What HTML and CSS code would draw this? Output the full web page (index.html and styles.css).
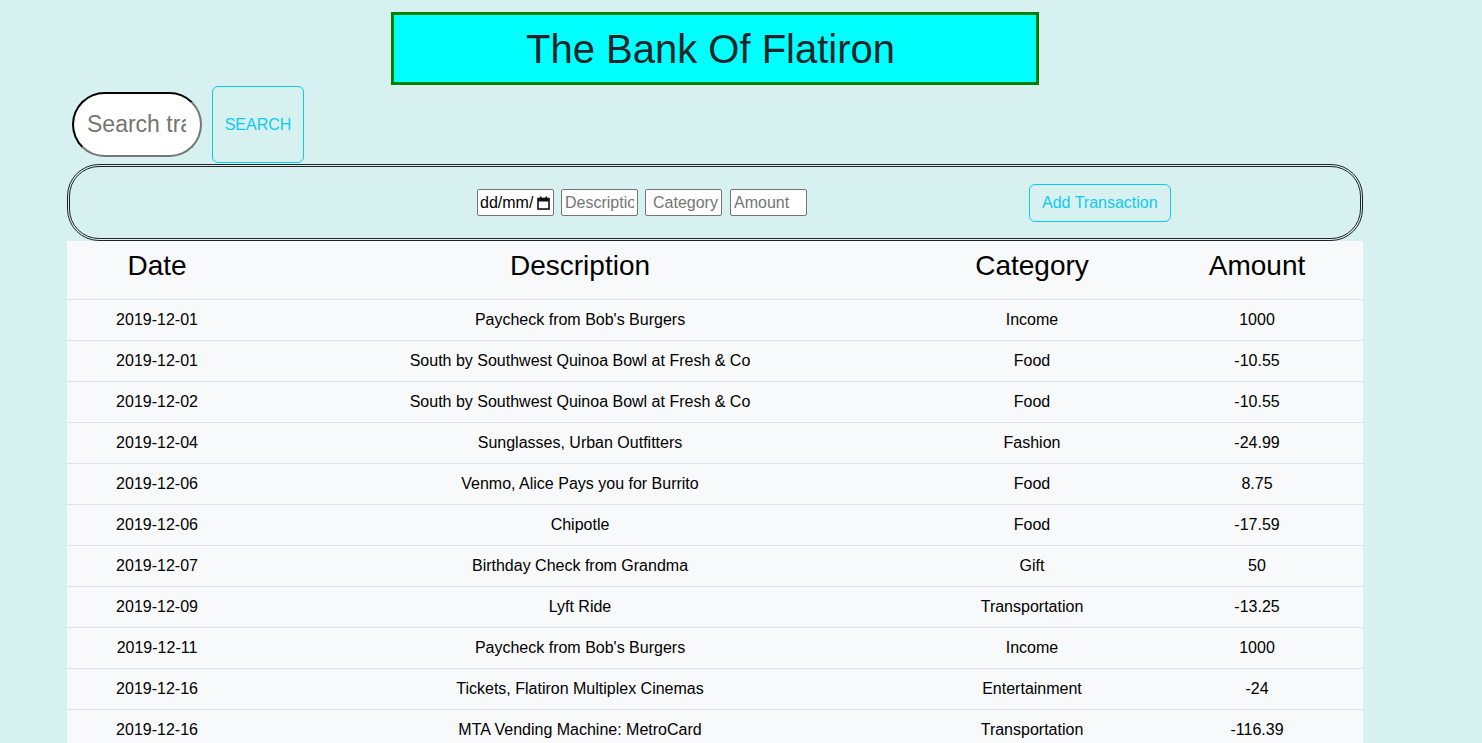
FILE: index.html
```html
<!DOCTYPE html>
<html lang="en">
<head>
<meta charset="utf-8">
<title>The Bank Of Flatiron</title>
<link rel="stylesheet" href="styles.css">
</head>
<body>
<div class="container">
  <div class="banner">
    <h1 class="banner-title">The Bank Of Flatiron</h1>
  </div>
  <div class="search-row">
    <input class="search-input" type="text" placeholder="Search transactions">
    <button class="btn-outline search-btn" type="button">SEARCH</button>
  </div>
  <form class="add-form">
    <div class="fields">
      <div class="date-input">
        <span class="date-text">dd/mm/</span>
        <svg class="cal-icon" width="13" height="14" viewBox="0 0 13 14" aria-hidden="true">
          <rect x="1" y="2.5" width="11" height="10.5" fill="none" stroke="#111" stroke-width="1.6"/>
          <rect x="1" y="2.5" width="11" height="3" fill="#111"/>
          <rect x="3" y="0.5" width="1.6" height="3" fill="#111"/>
          <rect x="8.4" y="0.5" width="1.6" height="3" fill="#111"/>
        </svg>
      </div>
      <input class="field" type="text" placeholder="Description">
      <input class="field field-cat" type="text" placeholder="Category">
      <input class="field" type="number" placeholder="Amount">
    </div>
    <button class="btn-outline add-btn" type="button">Add Transaction</button>
  </form>
  <table class="tx-table">
    <colgroup>
      <col class="c-date"><col class="c-desc"><col class="c-cat"><col class="c-amt">
    </colgroup>
    <thead>
      <tr>
        <th><h3 class="th-title">Date</h3></th>
        <th><h3 class="th-title">Description</h3></th>
        <th><h3 class="th-title">Category</h3></th>
        <th><h3 class="th-title">Amount</h3></th>
      </tr>
    </thead>
    <tbody>
      <tr><td>2019-12-01</td><td>Paycheck from Bob's Burgers</td><td>Income</td><td>1000</td></tr>
      <tr><td>2019-12-01</td><td>South by Southwest Quinoa Bowl at Fresh &amp; Co</td><td>Food</td><td>-10.55</td></tr>
      <tr><td>2019-12-02</td><td>South by Southwest Quinoa Bowl at Fresh &amp; Co</td><td>Food</td><td>-10.55</td></tr>
      <tr><td>2019-12-04</td><td>Sunglasses, Urban Outfitters</td><td>Fashion</td><td>-24.99</td></tr>
      <tr><td>2019-12-06</td><td>Venmo, Alice Pays you for Burrito</td><td>Food</td><td>8.75</td></tr>
      <tr><td>2019-12-06</td><td>Chipotle</td><td>Food</td><td>-17.59</td></tr>
      <tr><td>2019-12-07</td><td>Birthday Check from Grandma</td><td>Gift</td><td>50</td></tr>
      <tr><td>2019-12-09</td><td>Lyft Ride</td><td>Transportation</td><td>-13.25</td></tr>
      <tr><td>2019-12-11</td><td>Paycheck from Bob's Burgers</td><td>Income</td><td>1000</td></tr>
      <tr><td>2019-12-16</td><td>Tickets, Flatiron Multiplex Cinemas</td><td>Entertainment</td><td>-24</td></tr>
      <tr><td>2019-12-16</td><td>MTA Vending Machine: MetroCard</td><td>Transportation</td><td>-116.39</td></tr>
    </tbody>
  </table>
</div>
</body>
</html>
```
FILE: styles.css
```css
* { box-sizing: border-box; }
html, body {
  margin: 0;
  background: #d6f1f0;
  font-family: "Liberation Sans", Arial, sans-serif;
  color: #212529;
  font-size: 16px;
  line-height: 1.5;
}
.container {
  width: 1296px;
  margin-left: 67px;
  padding-top: 12px;
}
.banner {
  width: 648px;
  margin: 0 auto;
  height: 73px;
  border: 3px solid #008000;
  background: #00ffff;
  display: flex;
  align-items: center;
  justify-content: center;
}
.banner-title {
  margin: 0 9px 0 0;
  font-size: 40px;
  font-weight: 400;
  line-height: 1.2;
  color: #212529;
}
.search-row {
  display: flex;
  align-items: center;
  gap: 10px;
  padding-left: 5px;
  margin-top: 1px;
}
.search-input {
  width: 130px;
  height: 65px;
  border-radius: 33px;
  border: 2px inset #767676;
  border-top-color: #1a1a1a;
  border-left-color: #1a1a1a;
  background: #fff;
  padding: 0 14px 0 13px;
  font-family: "Liberation Sans", Arial, sans-serif;
  font-size: 23px;
  color: #212529;
  outline: none;
}
.search-input::placeholder { color: #757575; }
.btn-outline {
  background: transparent;
  border: 1px solid #0dcaf0;
  border-radius: 6px;
  color: #0dcaf0;
  font-family: "Liberation Sans", Arial, sans-serif;
  font-size: 16px;
  line-height: 1.5;
  cursor: pointer;
}
.search-btn {
  width: 92px;
  height: 77px;
  padding: 0;
}
.add-form {
  margin: 1px 0 0;
  height: 77px;
  border: 3px double #222;
  border-radius: 32px;
  display: flex;
  align-items: center;
  padding-left: 407px;
}
.fields {
  display: flex;
  align-items: center;
  gap: 7px;
}
.date-input, .field {
  width: 77px;
  height: 27px;
  border: 1px solid #767676;
  border-radius: 2px;
  background: #fff;
  font-family: "Liberation Sans", Arial, sans-serif;
  font-size: 16px;
}
.field {
  padding: 0 3px;
  color: #212529;
  outline: none;
  -moz-appearance: textfield;
}
.field::-webkit-outer-spin-button,
.field::-webkit-inner-spin-button { -webkit-appearance: none; margin: 0; }
.field::placeholder { color: #757575; }
.field-cat { padding-left: 7px; }
.date-input {
  display: flex;
  align-items: center;
  justify-content: space-between;
  padding: 0 3px 0 2px;
  color: #000;
}
.date-text {
  white-space: nowrap;
}
.cal-icon {
  flex: none;
}
.fields .field:nth-child(4) { margin-left: 1px; }
.add-btn {
  margin-left: 222px;
  height: 38px;
  padding: 6px 12px;
}
.tx-table {
  width: 1296px;
  border-collapse: collapse;
  table-layout: fixed;
  background: #f8f9fa;
  color: #000;
}
.c-date { width: 180px; }
.c-desc { width: 666px; }
.c-cat { width: 238px; }
.c-amt { width: 212px; }
.tx-table th, .tx-table td {
  padding: 8px;
  text-align: center;
  border-bottom: 1px solid #dee2e6;
  font-weight: 400;
  vertical-align: top;
}
.tx-table td { height: 41px; }
.th-title {
  margin: 0 0 8px;
  font-size: 28px;
  font-weight: 400;
  line-height: 1.2;
}
```
